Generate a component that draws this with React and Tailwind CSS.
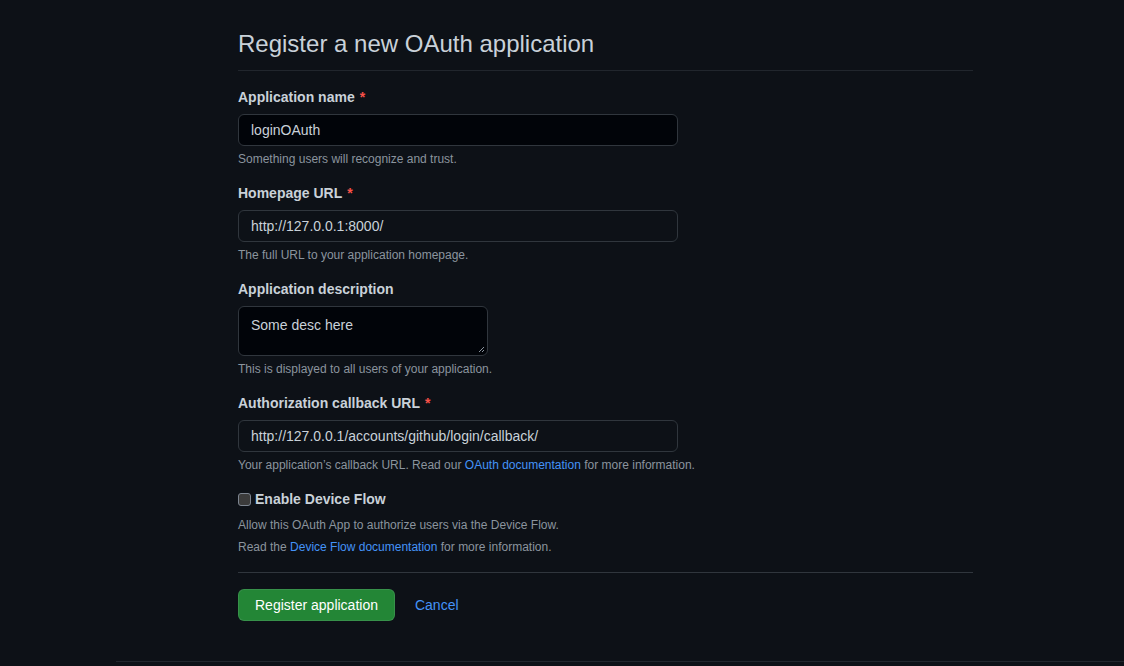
import React from 'react';

function Field({ label, required, children, note, className = '' }) {
  return (
    <div className={className}>
      <label className="block h-[21px] text-[14px] font-bold leading-[21px] text-[#c9d1d9]">
        {label}
        {required && <span className="ml-[5px] text-[#f85149]">*</span>}
      </label>
      <div className="mt-[6px]">{children}</div>
      <p className="mt-[4px] h-[18px] text-[12px] leading-[18px] text-[#8b949e]">{note}</p>
    </div>
  );
}

function TextInput({ value, dark }) {
  return (
    <div
      className={`flex h-[32px] w-[440px] items-center rounded-[6px] border border-[#30363d] px-3 text-[14px] text-[#c9d1d9] ${
        dark ? 'bg-[#010409]' : 'bg-[#0d1117]'
      }`}
    >
      {value}
    </div>
  );
}

export default function App() {
  return (
    <div className="min-h-[666px] bg-[#0d1117] font-['Liberation_Sans',Arial,sans-serif]">
      <div className="pl-[238px] pt-[26px]">
        <div className="w-[735px]">
          {/* heading */}
          <div className="border-b border-[#21262d] pb-[8px]">
            <h1 className="h-[36px] text-[24px] font-normal leading-[36px] text-[#c9d1d9]">
              Register a new OAuth application
            </h1>
          </div>

          <form className="pt-[16px]">
            <Field label="Application name" required note="Something users will recognize and trust.">
              <TextInput value="loginOAuth" dark />
            </Field>

            <Field
              className="mt-[15px]"
              label="Homepage URL"
              required
              note="The full URL to your application homepage."
            >
              <TextInput value="http://127.0.0.1:8000/" />
            </Field>

            <Field
              className="mt-[15px]"
              label="Application description"
              note="This is displayed to all users of your application."
            >
              <div className="relative h-[50px] w-[250px] rounded-[6px] border border-[#30363d] bg-[#010409] px-3 pt-[9px] text-[14px] leading-[18px] text-[#c9d1d9]">
                Some desc here
                <svg
                  className="absolute bottom-[2px] right-[2px]"
                  width="7"
                  height="7"
                  viewBox="0 0 7 7"
                >
                  <path d="M6 1L1 6M6 4L4 6" stroke="#8b949e" strokeWidth="1" />
                </svg>
              </div>
            </Field>

            <Field
              className="mt-[15px]"
              label="Authorization callback URL"
              required
              note={
                <>
                  Your application’s callback URL. Read our{' '}
                  <a className="text-[#4493f8]">OAuth documentation</a> for more information.
                </>
              }
            >
              <TextInput value="http://127.0.0.1/accounts/github/login/callback/" />
            </Field>

            <div className="mt-[15px]">
              <label className="flex h-[21px] items-center text-[14px] font-bold leading-[21px] text-[#c9d1d9]">
                <span className="mr-[4px] h-[13px] w-[13px] rounded-[3px] border border-[#7d8590] bg-[#3b3b3b]" />
                Enable Device Flow
              </label>
              <p className="mt-[4px] h-[22px] text-[12px] leading-[22px] text-[#8b949e]">
                Allow this OAuth App to authorize users via the Device Flow.
              </p>
              <p className="h-[22px] text-[12px] leading-[22px] text-[#8b949e]">
                Read the <a className="text-[#4493f8]">Device Flow documentation</a> for more
                information.
              </p>
            </div>

            <div className="mt-[14px] border-t border-[#30363d] pt-[16px]">
              <div className="flex items-center">
                <button
                  type="button"
                  className="h-[32px] rounded-[6px] border border-[rgba(240,246,252,0.1)] bg-[#238636] px-4 text-[14px] text-white"
                >
                  Register application
                </button>
                <a className="ml-[20px] text-[14px] text-[#4493f8]">Cancel</a>
              </div>
            </div>
          </form>
        </div>
      </div>
      <div className="ml-[116px] mt-[40px] border-t border-[#21262d]" />
    </div>
  );
}
